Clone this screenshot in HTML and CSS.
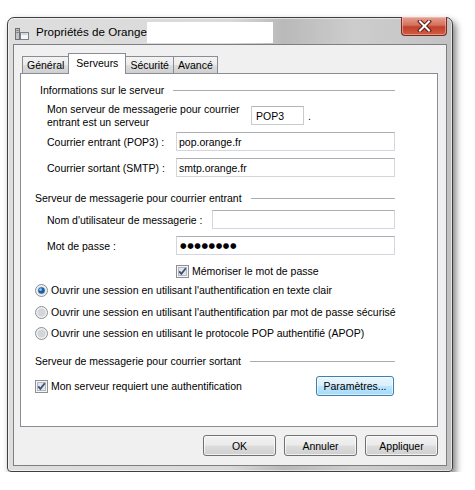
FILE: index.html
```html
<!DOCTYPE html>
<html lang="fr">
<head>
<meta charset="utf-8">
<title>Propriétés de Orange</title>
<link rel="stylesheet" href="styles.css">
</head>
<body>
<div class="window">
  <div class="titlebar">
    <svg class="app-icon" width="14" height="14" viewBox="0 0 14 14">
      <rect x="0.5" y="1.5" width="4" height="11" fill="#bfc3c7" stroke="#6d7175"/>
      <rect x="1.5" y="3" width="2" height="1" fill="#6d7175"/>
      <rect x="1.5" y="5" width="2" height="1" fill="#6d7175"/>
      <rect x="5.5" y="5.5" width="8" height="7" fill="#f4f6f8" stroke="#7d8185"/>
      <rect x="6.5" y="6.5" width="6" height="1" fill="#aab4bd"/>
    </svg>
    <span class="title">Propriétés de Orange</span>
    <span class="redact"></span>
    <div class="close">
      <svg width="15" height="12" viewBox="0 0 15 12">
        <path d="M3 1.5 L12 10.5 M12 1.5 L3 10.5" stroke="#5a1c14" stroke-width="4" stroke-linecap="square"/>
        <path d="M3 1.5 L12 10.5 M12 1.5 L3 10.5" stroke="#ffffff" stroke-width="2" stroke-linecap="square"/>
      </svg>
    </div>
  </div>
  <div class="client">
    <div class="tabs">
      <div class="tab">Général</div>
      <div class="tab active">Serveurs</div>
      <div class="tab">Sécurité</div>
      <div class="tab">Avancé</div>
    </div>
    <div class="panel">
      <div class="group first">
        <span>Informations sur le serveur</span><span class="rule"></span>
      </div>
      <div class="row server-type">
        <div class="label wide">Mon serveur de messagerie pour courrier<br>entrant est un serveur</div>
        <div class="box">POP3</div>
        <span class="dot">.</span>
      </div>
      <div class="row r-entrant">
        <div class="label">Courrier entrant (POP3) :</div>
        <div class="field">pop.orange.fr</div>
      </div>
      <div class="row r-sortant">
        <div class="label">Courrier sortant (SMTP) :</div>
        <div class="field">smtp.orange.fr</div>
      </div>

      <div class="group second">
        <span>Serveur de messagerie pour courrier entrant</span><span class="rule"></span>
      </div>
      <div class="row r-user">
        <div class="label user">Nom d'utilisateur de messagerie :</div>
        <div class="field"></div>
      </div>
      <div class="row r-pass">
        <div class="label">Mot de passe :</div>
        <div class="field password">●●●●●●●●</div>
      </div>
      <div class="check r-memo">
        <svg class="cb" width="13" height="13" viewBox="0 0 13 13">
          <rect x="0.5" y="0.5" width="12" height="12" fill="#f5f5f5" stroke="#8e8f8f"/>
          <rect x="2.5" y="2.5" width="8" height="8" fill="#e2e5ea" stroke="#b4b8bf"/>
          <path d="M3.2 6.3 L5.4 8.8 L9.8 3.3" fill="none" stroke="#3b4f7d" stroke-width="1.8"/>
        </svg>
        <span>Mémoriser le mot de passe</span>
      </div>
      <div class="check radio r-radio1">
        <svg class="rb" width="13" height="13" viewBox="0 0 13 13">
          <circle cx="6.5" cy="6.5" r="6" fill="#eef0f2" stroke="#8e8f8f"/>
          <circle cx="6.5" cy="6.5" r="4" fill="#d7dade"/>
          <circle cx="6.5" cy="6.5" r="3.3" fill="#1d5fa8"/>
          <circle cx="5.6" cy="5.6" r="1.4" fill="#8fc4f0"/>
        </svg>
        <span>Ouvrir une session en utilisant l'authentification en texte clair</span>
      </div>
      <div class="check radio r-radio2">
        <svg class="rb" width="13" height="13" viewBox="0 0 13 13">
          <circle cx="6.5" cy="6.5" r="6" fill="#eef0f2" stroke="#8e8f8f"/>
          <circle cx="6.5" cy="6.5" r="4" fill="#d2d5da"/>
        </svg>
        <span>Ouvrir une session en utilisant l'authentification par mot de passe sécurisé</span>
      </div>
      <div class="check radio r-radio3">
        <svg class="rb" width="13" height="13" viewBox="0 0 13 13">
          <circle cx="6.5" cy="6.5" r="6" fill="#eef0f2" stroke="#8e8f8f"/>
          <circle cx="6.5" cy="6.5" r="4" fill="#d2d5da"/>
        </svg>
        <span>Ouvrir une session en utilisant le protocole POP authentifié (APOP)</span>
      </div>

      <div class="group third">
        <span>Serveur de messagerie pour courrier sortant</span><span class="rule"></span>
      </div>
      <div class="check last-row">
        <svg class="cb" width="13" height="13" viewBox="0 0 13 13">
          <rect x="0.5" y="0.5" width="12" height="12" fill="#f5f5f5" stroke="#8e8f8f"/>
          <rect x="2.5" y="2.5" width="8" height="8" fill="#e2e5ea" stroke="#b4b8bf"/>
          <path d="M3.2 6.3 L5.4 8.8 L9.8 3.3" fill="none" stroke="#3b4f7d" stroke-width="1.8"/>
        </svg>
        <span>Mon serveur requiert une authentification</span>
        <div class="btn focus">Paramètres...</div>
      </div>
    </div>
    <div class="buttons">
      <div class="btn">OK</div>
      <div class="btn">Annuler</div>
      <div class="btn">Appliquer</div>
    </div>
  </div>
</div>
</body>
</html>
```
FILE: styles.css
```css
html, body {
  margin: 0;
  padding: 0;
  background: #ffffff;
}

body {
  font-family: "Liberation Sans", Arial, sans-serif;
  font-size: 10.5px;
  color: #000;
}

.window {
  box-sizing: border-box;
  width: 446px;
  height: 455px;
  margin: 17px 0 0 7px;
  border: 1px solid #3f3f3f;
  border-radius: 7px 7px 4px 4px;
  padding: 0 5px 5px;
  background: linear-gradient(to right, #dedede 0%, #d9d9d9 50%, #b9b9b9 62%, #cdcdcd 78%, #c2c2c2 100%);
  box-shadow: inset 0 0 0 1px rgba(255,255,255,0.55), 3px 4px 7px rgba(0,0,0,0.5);
}

.titlebar {
  height: 26px;
  display: flex;
  align-items: center;
  padding-left: 2px;
}

.app-icon {
  flex: none;
  margin-top: 5px;
}

.title {
  font-size: 11.6px;
  margin-left: 7px;
  margin-top: 1px;
  color: #000;
}

.redact {
  width: 126px;
  height: 21px;
  background: #fff;
  margin-top: 2px;
}

.close {
  margin-left: auto;
  align-self: flex-start;
  margin-top: -1px;
  width: 46px;
  height: 19px;
  box-sizing: border-box;
  border: 1px solid #7a2a20;
  border-top: none;
  border-radius: 0 0 4px 4px;
  background: linear-gradient(#e7a08f 0%, #d4715e 45%, #c2412b 55%, #cf5d45 100%);
  box-shadow: inset 0 0 0 1px rgba(255,220,210,0.45);
  display: flex;
  align-items: center;
  justify-content: center;
}

.client {
  box-sizing: border-box;
  height: 422px;
  border: 1px solid #7d7f84;
  background: #f0f0f0;
  padding: 8px 8px 9px 6px;
}

.tabs {
  height: 20px;
  display: flex;
  align-items: flex-end;
  padding-left: 2px;
}

.tab {
  box-sizing: border-box;
  height: 17px;
  padding: 0 4px;
  margin-left: -1px;
  border: 1px solid #898c95;
  border-bottom: none;
  background: linear-gradient(#f3f3f3, #ebebeb 50%, #dddddd 51%, #cfcfcf);
  display: flex;
  align-items: center;
}

.tab:first-child {
  margin-left: 0;
}

.tab.active {
  height: 21px;
  padding: 0 7px 3px;
  margin-bottom: -1px;
  background: #fff;
  position: relative;
  z-index: 1;
}

.panel {
  box-sizing: border-box;
  height: 354px;
  border: 1px solid #898c95;
  background: #fff;
  padding-top: 9px;
}

.group {
  height: 14px;
  display: flex;
  align-items: center;
  padding-right: 42px;
}

.group.first { padding-left: 19px; }
.group.second { padding-left: 14px; margin-top: 14px; }
.group.third { padding-left: 14px; margin-top: 14px; }

.rule {
  flex: 1;
  height: 0;
  border-top: 1px solid #a9abae;
  margin-left: 9px;
}

.row {
  display: flex;
  align-items: center;
  height: 19px;
  padding-left: 26px;
  padding-right: 42px;
}

.label {
  width: 129px;
  flex: none;
}

.label.wide {
  width: 204px;
  line-height: 13px;
}

.label.user {
  width: 165px;
}

.server-type {
  height: 26px;
  align-items: flex-start;
  margin-top: 6px;
}

.box {
  box-sizing: border-box;
  width: 53px;
  height: 19px;
  margin-top: 3px;
  border: 1px solid #c9cbcf;
  border-top-color: #b3b5ba;
  padding-left: 4px;
  display: flex;
  align-items: center;
}

.dot {
  margin-left: 4px;
  margin-top: 7px;
}

.field {
  box-sizing: border-box;
  flex: 1;
  height: 19px;
  border: 1px solid #d3d6dc;
  border-top-color: #abadb3;
  padding-left: 2px;
  display: flex;
  align-items: center;
}

.field.password {
  font-family: "DejaVu Sans", sans-serif;
  font-size: 7.5px;
  letter-spacing: 0.6px;
  padding-left: 3px;
}

.r-entrant { margin-top: 3px; }
.r-sortant { margin-top: 7px; }
.r-user { margin-top: 5px; }
.r-pass { margin-top: 7px; }

.check {
  display: flex;
  align-items: center;
  height: 14px;
}

.check svg {
  flex: none;
  margin-right: 3px;
}

.r-memo { margin-top: 9px; padding-left: 155px; }
.radio { padding-left: 14px; }
.r-radio1 { margin-top: 5px; }
.r-radio2 { margin-top: 8px; }
.r-radio3 { margin-top: 7px; }

.last-row {
  height: 20px;
  margin-top: 8px;
  padding-left: 14px;
  padding-right: 43px;
}

.btn {
  box-sizing: border-box;
  width: 73px;
  height: 21px;
  border: 1px solid #707070;
  border-radius: 3px;
  background: linear-gradient(#f2f2f2 0%, #ebebeb 48%, #dddddd 52%, #cfcfcf 100%);
  box-shadow: inset 0 0 0 1px rgba(255,255,255,0.7);
  display: flex;
  align-items: center;
  justify-content: center;
}

.btn.focus {
  margin-left: auto;
  width: 78px;
  height: 20px;
  border-color: #3c7fb1;
  background: linear-gradient(#eaf6fd 0%, #d9f0fc 48%, #bee6fd 52%, #a7d9f5 100%);
  box-shadow: inset 0 0 0 1px rgba(255,255,255,0.6);
}

.buttons {
  display: flex;
  justify-content: flex-end;
  gap: 8px;
  margin-top: 8px;
}
```
